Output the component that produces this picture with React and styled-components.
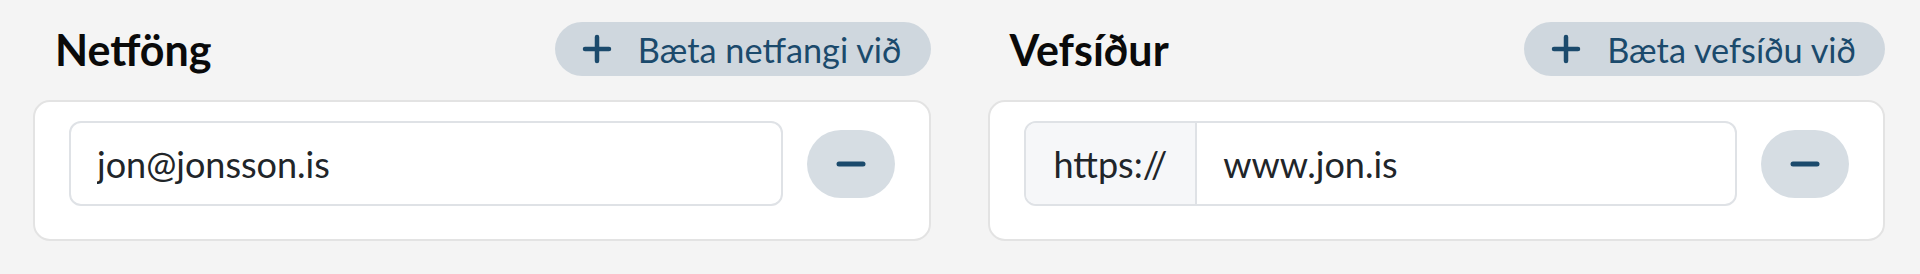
import React from 'react';
import styled, { createGlobalStyle } from 'styled-components';

const GlobalStyle = createGlobalStyle`
  html, body {
    margin: 0;
    padding: 0;
    background: #f4f4f4;
  }
  body {
    font-family: Lato, "Liberation Sans", sans-serif;
    color: #212529;
  }
`;

const Page = styled.div`
  display: grid;
  grid-template-columns: 1fr 1fr;
  column-gap: 57px;
  padding: 22px 35px 33px 33px;
`;

const Column = styled.section`
  display: flex;
  flex-direction: column;
`;

const Header = styled.header`
  display: flex;
  justify-content: space-between;
  align-items: center;
  height: 54px;
  margin-bottom: 24px;
`;

const Title = styled.h2`
  margin: 0;
  padding-left: 22px;
  font-size: 43px;
  font-weight: 700;
  color: #0a0a0a;
`;

const AddButton = styled.button`
  display: flex;
  align-items: center;
  gap: 26px;
  height: 54px;
  padding: 0 29px 0 27px;
  border: none;
  border-radius: 27px;
  background: #cfd7de;
  color: #1b4a6c;
  font-family: inherit;
  font-size: 34.3px;
  cursor: pointer;
  svg {
    width: 30px;
    height: 30px;
  }
`;

const Card = styled.div`
  background: #fff;
  border: 2px solid #e3e3e3;
  border-radius: 17px;
  padding: 19px 34px 33px 34px;
`;

const Row = styled.div`
  display: flex;
  align-items: center;
  gap: 24px;
`;

const Field = styled.div`
  flex: 1;
  display: flex;
  height: 85px;
  box-sizing: border-box;
  border: 2px solid #dfe2e6;
  border-radius: 12px;
  overflow: hidden;
  background: #fff;
`;

const Prefix = styled.span`
  display: flex;
  align-items: center;
  padding: 0 28px;
  background: #f6f7f9;
  border-right: 2px solid #dfe2e6;
  font-size: 36px;
  color: #212529;
`;

const Input = styled.input`
  flex: 1;
  min-width: 0;
  border: none;
  outline: none;
  padding: 0 26px;
  font-family: inherit;
  font-size: 36px;
  color: #212529;
  background: transparent;
`;

const RemoveButton = styled.button`
  flex: none;
  display: flex;
  align-items: center;
  justify-content: center;
  width: 88px;
  height: 68px;
  border: none;
  border-radius: 34px;
  background: #d6dde3;
  color: #1b4a6c;
  cursor: pointer;
  svg {
    width: 32px;
    height: 32px;
  }
`;

const PlusIcon = () => (
  <svg viewBox="0 0 30 30" fill="none" stroke="currentColor" strokeWidth="4.5" strokeLinecap="round">
    <path d="M15 3v24M3 15h24" />
  </svg>
);

const MinusIcon = () => (
  <svg viewBox="0 0 32 32" fill="none" stroke="currentColor" strokeWidth="5" strokeLinecap="round">
    <path d="M4 16h24" />
  </svg>
);

const ListSection = ({ title, addLabel, value, prefix }) => (
  <Column>
    <Header>
      <Title>{title}</Title>
      <AddButton type="button">
        <PlusIcon />
        {addLabel}
      </AddButton>
    </Header>
    <Card>
      <Row>
        <Field>
          {prefix && <Prefix>{prefix}</Prefix>}
          <Input defaultValue={value} />
        </Field>
        <RemoveButton type="button" aria-label="Fjarlægja">
          <MinusIcon />
        </RemoveButton>
      </Row>
    </Card>
  </Column>
);

const App = () => (
  <>
    <GlobalStyle />
    <Page>
      <ListSection title="Netföng" addLabel="Bæta netfangi við" value="jon@jonsson.is" />
      <ListSection title="Vefsíður" addLabel="Bæta vefsíðu við" value="www.jon.is" prefix="https://" />
    </Page>
  </>
);

export default App;
